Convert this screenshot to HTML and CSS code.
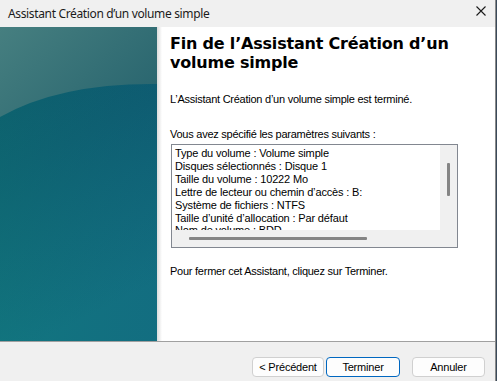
FILE: index.html
```html
<!DOCTYPE html>
<html lang="fr">
<head>
<meta charset="utf-8">
<title>Assistant Création d’un volume simple</title>
<link rel="stylesheet" href="styles.css">
</head>
<body>
<div class="screen">
  <div class="window">
    <div class="titlebar">
      <span class="title">Assistant Création d’un volume simple</span>
      <span class="close" aria-label="Fermer">
        <svg width="10" height="10" viewBox="0 0 10 10"><path d="M0.5 0.5 L9.5 9.5 M9.5 0.5 L0.5 9.5" stroke="#1a1a1a" stroke-width="1.1" fill="none"/></svg>
      </span>
    </div>
    <div class="main">
      <div class="banner">
        <svg width="157" height="314" viewBox="0 0 157 314">
          <defs>
            <linearGradient id="gLow" x1="0" y1="0" x2="0.25" y2="1">
              <stop offset="0" stop-color="#0a5262"/>
              <stop offset="0.45" stop-color="#0d5d6d"/>
              <stop offset="1" stop-color="#12727f"/>
            </linearGradient>
            <linearGradient id="gSide" x1="0" y1="0" x2="1" y2="0">
              <stop offset="0" stop-color="#128080" stop-opacity="0.25"/>
              <stop offset="1" stop-color="#145c86" stop-opacity="0.2"/>
            </linearGradient>
            <linearGradient id="gTop" x1="0" y1="0" x2="1" y2="0.6">
              <stop offset="0" stop-color="#467f80"/>
              <stop offset="1" stop-color="#2b6770"/>
            </linearGradient>
          </defs>
          <rect width="157" height="314" fill="url(#gLow)"/>
          <rect width="157" height="314" fill="url(#gSide)"/>
          <path d="M0 0 H157 V57 Q60 56 0 90 Z" fill="url(#gTop)"/>
        </svg>
      </div>
      <div class="shade"></div>
      <div class="content">
        <h1 class="heading">Fin de l’Assistant Création d’un volume simple</h1>
        <p class="text intro">L’Assistant Création d’un volume simple est terminé.</p>
        <p class="text label">Vous avez spécifié les paramètres suivants :</p>
        <div class="listbox">
          <div class="list">
            <div>Type du volume : Volume simple</div>
            <div>Disques sélectionnés : Disque 1</div>
            <div>Taille du volume : 10222 Mo</div>
            <div>Lettre de lecteur ou chemin d’accès : B:</div>
            <div>Système de fichiers : NTFS</div>
            <div>Taille d’unité d’allocation : Par défaut</div>
            <div>Nom de volume : BDD</div>
          </div>
          <div class="vscroll"><span class="vthumb"></span></div>
          <div class="hscroll"><span class="hthumb"></span></div>
          <div class="corner"></div>
        </div>
        <p class="text outro">Pour fermer cet Assistant, cliquez sur Terminer.</p>
      </div>
    </div>
    <div class="footer">
      <button class="btn prev">&lt; Précédent</button>
      <button class="btn finish">Terminer</button>
      <button class="btn cancel">Annuler</button>
    </div>
  </div>
  <div class="desk"></div>
</div>
</body>
</html>
```

FILE: styles.css
```css
html, body {
  margin: 0;
  padding: 0;
}
body {
  width: 497px;
  height: 381px;
  overflow: hidden;
  background: #f0f0f0;
}
.screen {
  display: flex;
  width: 497px;
  height: 381px;
}
.window {
  width: 495px;
  height: 381px;
  display: flex;
  flex-direction: column;
  border-right: 1px solid #8a8a8a;
  background: #f0f0f0;
}
.desk {
  width: 1px;
  background: #3a4a5a;
}
.titlebar {
  height: 27px;
  flex: none;
  display: flex;
  align-items: center;
  justify-content: space-between;
  background: #f0f0f0;
}
.title {
  padding-left: 8px;
  font-family: "Noto Sans", "Open Sans", sans-serif;
  font-size: 12px;
  color: #1b1b1b;
  letter-spacing: -0.35px;
}
.close {
  display: flex;
  width: 10px;
  height: 10px;
  margin-right: 9px;
  margin-top: -5px;
}
.main {
  height: 314px;
  flex: none;
  display: flex;
  background: #fff;
  border-bottom: 1px solid #a0a0a0;
}
.banner {
  width: 157px;
  height: 314px;
  flex: none;
}
.banner svg {
  display: block;
}
.shade {
  width: 5px;
  flex: none;
  background: linear-gradient(to right, #dcdcdc, #f4f4f4 70%, #fff);
}
.content {
  flex: 1;
  padding-left: 8px;
  font-family: "Liberation Sans", Arial, sans-serif;
  color: #000;
}
.heading {
  margin: 7px 0 0 0;
  width: 300px;
  font-family: "DejaVu Sans", Verdana, sans-serif;
  font-weight: bold;
  font-size: 16px;
  line-height: 19px;
  letter-spacing: -0.2px;
  color: #000;
}
.text {
  margin: 0;
  font-size: 11px;
  line-height: 13px;
  letter-spacing: -0.25px;
}
.intro {
  margin-top: 21px;
}
.label {
  margin-top: 22px;
}
.listbox {
  margin-top: 3px;
  margin-left: 1px;
  width: 285px;
  height: 102px;
  border: 1px solid #828790;
  display: grid;
  grid-template-columns: 1fr 17px;
  grid-template-rows: 1fr 17px;
  background: #fff;
}
.list {
  overflow: hidden;
  padding: 2px 0 0 3px;
  font-size: 11px;
  line-height: 12.9px;
  letter-spacing: -0.15px;
  white-space: nowrap;
}
.vscroll {
  background: #f0f0f0;
  display: flex;
  justify-content: center;
  padding-top: 18px;
}
.vthumb {
  width: 3px;
  height: 33px;
  background: #858585;
  border-radius: 1px;
}
.hscroll {
  background: #f0f0f0;
  padding-left: 17px;
  padding-top: 7px;
}
.hthumb {
  display: block;
  width: 178px;
  height: 3px;
  background: #858585;
  border-radius: 1px;
}
.corner {
  background: #f0f0f0;
}
.outro {
  margin-top: 17px;
}
.footer {
  flex: 1;
  display: flex;
  align-items: flex-start;
  padding-top: 15px;
  padding-left: 252px;
  background: #f0f0f0;
}
.btn {
  height: 20px;
  padding: 0;
  font-family: "Liberation Sans", Arial, sans-serif;
  font-size: 11px;
  letter-spacing: -0.2px;
  color: #000;
  background: #fdfdfd;
  border: 1px solid #d0d0d0;
  border-radius: 4px;
}
.prev {
  width: 72px;
}
.finish {
  width: 74px;
  margin-left: 2px;
  border-color: #0067c0;
}
.cancel {
  width: 73px;
  margin-left: 12px;
}
```
